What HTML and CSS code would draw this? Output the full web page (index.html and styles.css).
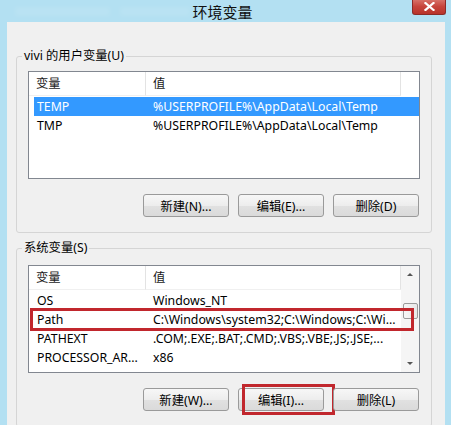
FILE: index.html
```html
<!DOCTYPE html>
<html lang="zh-CN">
<head>
<meta charset="utf-8">
<title>环境变量</title>
<link rel="stylesheet" href="styles.css">
</head>
<body>
<div class="window">
  <div class="titlebar">
    <span class="ghost ghost-a"></span><span class="ghost ghost-b"></span>
    <span class="title">环境变量</span>
    <div class="close">
      <svg width="11" height="9" viewBox="0 0 11 9"><path d="M1.5 1 L9.5 8 M9.5 1 L1.5 8" stroke="#fff" stroke-width="2.2" stroke-linecap="square"/></svg>
    </div>
  </div>
  <div class="content">
    <fieldset class="group group-user">
      <legend>vivi 的用户变量(U)</legend>
      <div class="list">
        <div class="list-main">
          <div class="list-head">
            <div class="hcol hc1">变量</div>
            <div class="hcol hc2">值</div>
          </div>
          <div class="row selected"><div class="c1">TEMP</div><div class="c2">%USERPROFILE%\AppData\Local\Temp</div></div>
          <div class="row"><div class="c1">TMP</div><div class="c2">%USERPROFILE%\AppData\Local\Temp</div></div>
        </div>
      </div>
      <div class="buttons">
        <button class="btn">新建(N)...</button>
        <button class="btn">编辑(E)...</button>
        <button class="btn">删除(D)</button>
      </div>
    </fieldset>

    <fieldset class="group group-sys">
      <legend>系统变量(S)</legend>
      <div class="list list-sys">
        <div class="list-main">
          <div class="list-head">
            <div class="hcol hc1">变量</div>
            <div class="hcol hc2">值</div>
          </div>
          <div class="row"><div class="c1">OS</div><div class="c2">Windows_NT</div></div>
          <div class="row"><div class="c1">Path</div><div class="c2">C:\Windows\system32;C:\Windows;C:\Wi...</div></div>
          <div class="row"><div class="c1">PATHEXT</div><div class="c2">.COM;.EXE;.BAT;.CMD;.VBS;.VBE;.JS;.JSE;...</div></div>
          <div class="row"><div class="c1">PROCESSOR_AR...</div><div class="c2">x86</div></div>
        </div>
        <div class="scrollbar">
          <div class="sb-btn"><span class="arrow-up"></span></div>
          <div class="sb-track"><div class="sb-thumb"></div></div>
          <div class="sb-btn"><span class="arrow-down"></span></div>
        </div>
        <div class="mark mark-path"></div>
      </div>
      <div class="buttons">
        <button class="btn">新建(W)...</button>
        <button class="btn marked">编辑(I)...</button>
        <button class="btn">删除(L)</button>
      </div>
    </fieldset>
  </div>
</div>
</body>
</html>
```

FILE: styles.css
```css
*, *::before, *::after { box-sizing: border-box; }

body {
  margin: 0;
  font-family: "Noto Sans", "Noto Sans CJK SC", sans-serif;
  font-size: 12.3px;
  color: #000;
}

.window {
  width: 451px;
  height: 425px;
  background: #b3e0f2;
  position: relative;
  overflow: hidden;
  display: flex;
  flex-direction: column;
}

.titlebar {
  height: 22px;
  flex: none;
  display: flex;
  align-items: center;
  justify-content: center;
  padding-right: 6px;
  position: relative;
}

.title {
  font-family: "Noto Sans CJK SC", sans-serif;
  font-size: 15px;
  color: #111;
  position: relative;
}

.ghost {
  position: absolute;
  top: 7px;
  height: 9px;
  background: rgba(255,255,255,0.09);
  filter: blur(2px);
}
.ghost-a { left: 15px; width: 95px; }
.ghost-b { left: 120px; width: 70px; }

.close {
  position: absolute;
  top: -1px;
  right: 5px;
  width: 34px;
  height: 16px;
  border: 1px solid #8b2b27;
  border-top: none;
  border-radius: 0 0 3px 3px;
  background: linear-gradient(#d9776e, #c7453c 50%, #b8332a);
  display: flex;
  align-items: center;
  justify-content: center;
}

.content {
  flex: 1;
  margin: 0 6px 0 7px;
  background: #f0f0f0;
  padding-top: 26px;
}

.group {
  margin: 0 13px 0 9px;
  border: 1px solid #d5d5d5;
  border-radius: 3px;
  padding: 7px 11px 15px;
  min-width: 0;
}

.group legend {
  padding: 0 2px;
  margin-left: -6px;
  height: 16px;
  line-height: 16px;
}

.group-sys {
  margin-top: 7px;
  padding-top: 9px;
}

.list {
  height: 108px;
  border: 1px solid #828790;
  background: #fff;
  display: flex;
  position: relative;
}

.list-main {
  flex: 1;
  min-width: 0;
  overflow: hidden;
}

.list-head {
  display: flex;
  height: 25px;
}

.hcol {
  height: 24px;
  line-height: 23px;
  padding-left: 7px;
  border-right: 1px solid #e3e3e3;
  border-bottom: 1px solid #f0f0f0;
  color: #1a1a1a;
}
.hc1 { width: 117px; }
.hc2 { width: 255px; }

.row {
  display: grid;
  grid-template-columns: 112px 255px;
  margin-left: 5px;
  height: 19px;
  line-height: 19px;
  white-space: nowrap;
}
.row .c1 { padding-left: 3px; overflow: hidden; }
.row .c2 { padding-left: 7px; overflow: hidden; }

.row.selected {
  background: #3399ff;
  color: #fff;
}

.scrollbar {
  width: 18px;
  flex: none;
  background: #f5f5f5;
  display: flex;
  flex-direction: column;
}

.sb-btn {
  height: 17px;
  flex: none;
  display: flex;
  align-items: center;
  justify-content: center;
}

.arrow-up, .arrow-down {
  width: 0;
  height: 0;
  border-left: 3px solid transparent;
  border-right: 3px solid transparent;
}
.arrow-up { border-bottom: 3px solid #555; }
.arrow-down { border-top: 3px solid #555; }

.sb-track { flex: 1; padding: 20px 1px 0 2px; }

.sb-thumb {
  height: 16px;
  border: 1px solid #9b9b9b;
  border-radius: 2px;
  background: linear-gradient(90deg, #f6f6f6, #e8e8e8);
}

.mark {
  position: absolute;
  border: 3px solid #c1272d;
  z-index: 2;
}
.mark-path {
  top: 42px;
  left: 1px;
  width: 384px;
  height: 23px;
}

.buttons {
  display: flex;
  justify-content: flex-end;
  gap: 9px;
  margin-top: 15px;
  padding-right: 1px;
}

.btn {
  width: 86px;
  height: 23px;
  border: 1px solid #9a9a9a;
  border-radius: 3px;
  background: linear-gradient(#f7f7f7, #ededed 50%, #e1e1e1 51%, #dadada);
  font-family: "Noto Sans", "Noto Sans CJK SC", sans-serif;
  font-size: 12.3px;
  color: #000;
  padding: 0;
  position: relative;
}

.btn.marked::after {
  content: "";
  position: absolute;
  top: -5px;
  left: 3px;
  width: 93px;
  height: 31px;
  border: 3px solid #c1272d;
}
```
